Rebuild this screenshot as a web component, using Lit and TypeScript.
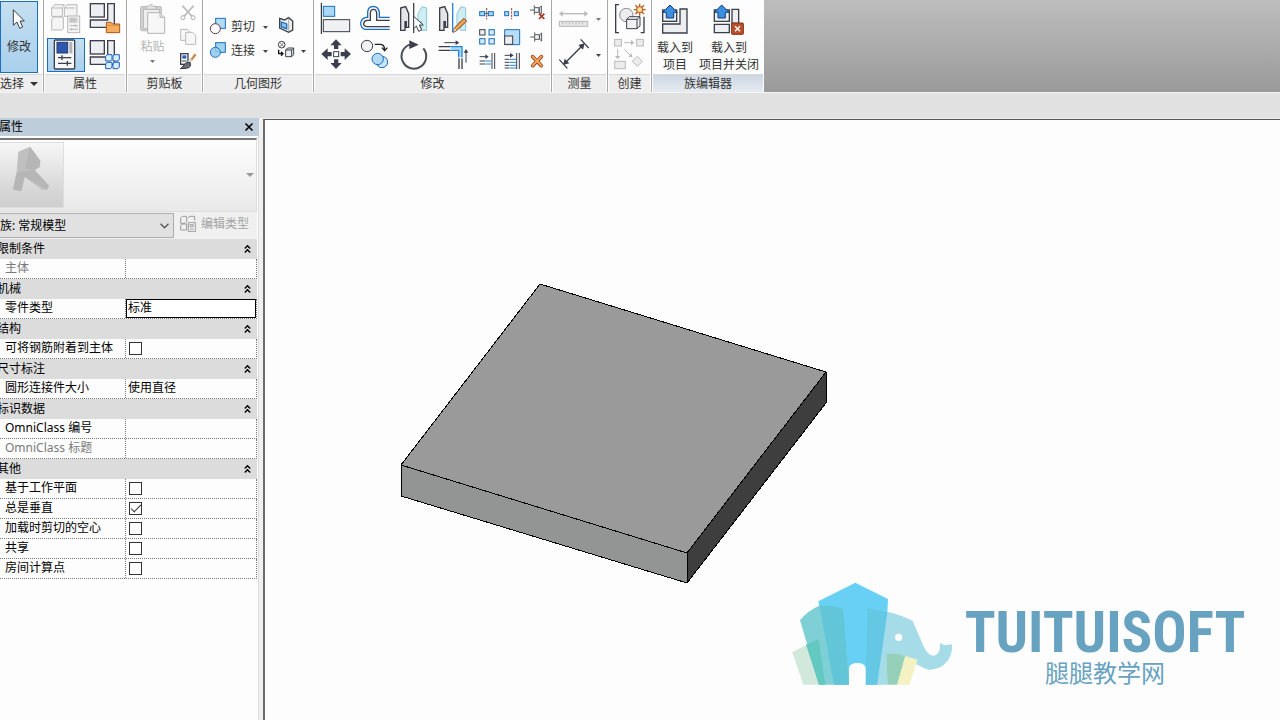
import { LitElement, html, svg, css, nothing } from "lit";
import type { SVGTemplateResult } from "lit";
import { customElement } from "lit/decorators.js";
import { classMap } from "lit/directives/class-map.js";

// Icon artwork is drawn on a 3-units-per-pixel sheet; `x`/`y` select the tile.
const icon = (x: number, y: number, w: number, h: number, art: SVGTemplateResult) =>
  html`<svg class="ic" width=${w} height=${h} viewBox="${x} ${y} ${w * 3} ${h * 3}" aria-hidden="true">${art}</svg>`;

const caret = (off = false) =>
  html`<svg class="ic" width="5" height="3" viewBox="0 0 5 3" aria-hidden="true"><path d="M0 0H5L2.5 3Z" fill=${off ? "#777" : "#444"} /></svg>`;

const D = "#3b3f4c";
const B = "#1c6fbe";
const G = "#b9b9b9";

const cursorArt = svg`<path d="M40 29V76L51 66L59 85L68 81L60 63H73Z" fill="#fff" stroke=${D} stroke-width="3"/>`;

const typeProps = svg`<g fill="#f4f4f4" stroke=${G} stroke-width="3">
  <path d="M155 24L163 14H193L187 24V49H155ZM155 24H187"/><path d="M193 24L201 14H231V44L224 49H193ZM193 24H224"/>
  <path d="M155 58L161 51H190V86L184 90H155Z"/><rect x="203" y="48" width="36" height="50"/></g>
  <rect x="208" y="53" width="20" height="15" fill="#c4c4c4"/><path d="M231 53V68M208 77H234M208 88H234M226 73V81M215 84V92" stroke=${G} stroke-width="3" fill="none"/>`;
const cats = (dy: number) => svg`<g fill="#eceef1" stroke=${D} stroke-width="4" transform="translate(0 ${dy})">
  <rect x="271" y="11" width="42" height="40"/><path d="M323 11H343V82H271V60H323Z"/></g>`;
const folder = svg`${cats(0)}<path d="M319 98V67H333L338 72H359V98Z" fill="#f4ad5e" stroke="#a9561b" stroke-width="3"/><path d="M320 76H358" stroke="#c97a32" stroke-width="2"/>`;
const cube = (x: number, y: number) => svg`<path d="M${x} ${y + 5}L${x + 4} ${y}H${x + 19}V${y + 14}L${x + 15} ${y + 19}H${x}Z" fill="#d9eefb" stroke="#1760bd" stroke-width="3"/>`;
const famTypes = svg`${cats(111)}${cube(317, 164)}${cube(339, 164)}${cube(317, 187)}${cube(339, 187)}`;
const palette = svg`<rect x="163" y="120" width="61" height="87" rx="3" fill="#f7f7f7" stroke=${D} stroke-width="4"/>
  <rect x="171" y="127" width="32" height="32" fill="#2d58ae" stroke="#22366f" stroke-width="3"/><rect x="208" y="126" width="9" height="34" fill="#b0b3ba"/>
  <path d="M174 173H214M174 190H214M186 166V180M202 183V197" stroke=${D} stroke-width="4"/>`;

const pasteArt = svg`<g stroke="#b4b4b4" stroke-width="3"><rect x="422" y="20" width="62" height="72" rx="4" fill="#d6d6d6"/><rect x="430" y="28" width="48" height="58" fill="#eee"/>
  <path d="M438 28V19H446Q452 8 461 19H469V28Z" fill="#e2e2e2"/><path d="M443 38H480L494 52V100H443Z" fill="#f7f7f7"/><path d="M480 38V52H494" fill="#e4e4e4"/></g>`;
const cutArt = svg`<path d="M547 17L576 49M581 17L552 49" stroke="#bdbdbd" stroke-width="5"/><g fill="#fff" stroke="#b0b0b0" stroke-width="3"><circle cx="549" cy="53" r="6"/><circle cx="579" cy="53" r="6"/></g>`;
const copyArt = svg`<g fill="#f7f7f7" stroke=${G} stroke-width="3"><path d="M542 88H562L569 95V121H542Z"/><path d="M557 97H578L587 106V133H557Z"/></g>`;
const brushArt = svg`<rect x="542" y="161" width="22" height="32" fill="#fff" stroke=${D} stroke-width="4"/><rect x="547" y="166" width="12" height="10" fill="#2f63b5"/><path d="M546 183H560" stroke=${D} stroke-width="3"/>
  <path d="M587 163L568 187" stroke="#c98a52" stroke-width="7"/><path d="M574 179L565 189" stroke="#ddd" stroke-width="8"/><path d="M570 187Q577 202 559 205L541 206Q549 202 551 195Q557 185 570 187Z" fill="#6a6d74" stroke="#33363f" stroke-width="3"/>`;

const cutGeo = svg`<rect x="47" y="55" width="29" height="30" fill="#b3dbf3" stroke=${B} stroke-width="3"/><circle cx="46" cy="86" r="15" fill="#fff" stroke="#5a3b45" stroke-width="3"/>`;
const joinGeo = svg`<rect x="47" y="128" width="29" height="29" fill="#9fd3ee" stroke=${B} stroke-width="3"/><circle cx="46" cy="157" r="15" fill="#9fd0f2" stroke=${B} stroke-width="3"/><path d="M47 143V155H60" fill="none" stroke="#6db9c9" stroke-width="2"/>`;
const cope = svg`<path d="M239 55L253 60L266 53L278 63V90L266 97L239 84Z" fill="#eee" stroke=${D} stroke-width="4"/><path d="M266 53V96" stroke="#888" stroke-width="2"/><path d="M244 66L260 72V86L244 80Z" fill="#8fc6ec" stroke=${B} stroke-width="4"/>`;
const paint = svg`<circle cx="245" cy="134" r="10" fill="#fff" stroke=${D} stroke-width="3"/><path d="M239 127L252 141M252 127L239 141" stroke=${D} stroke-width="2"/>
  <path d="M236 149V161H247M243 155L249 161L243 167" fill="none" stroke="#111" stroke-width="4"/><path d="M257 150L263 144H281V164L275 170H257ZM257 150H275V170M275 150L281 144" fill="#eee" stroke=${D} stroke-width="3"/>`;

const alignArt = svg`<path d="M34 9V102" stroke="#111" stroke-width="3"/><rect x="40" y="19" width="34" height="30" fill="#aad7f5" stroke=${B} stroke-width="3"/><rect x="40" y="59" width="79" height="36" fill="#f0f1f3" stroke=${D} stroke-width="3"/>`;
const offsetArt = svg`<g fill="none" stroke-width="4"><path d="M239 88H165Q152 84 152 69Q154 55 168 52H173V37Q174 20 189 19Q206 20 208 37V52H239" stroke=${B}/><path d="M239 80H171Q160 78 161 70Q162 62 172 61H181V39Q182 28 190 28Q199 28 200 39V61H239" stroke=${D}/></g>`;
const mirror = (x: number) => svg`<path d="M${x} 24L${x + 15} 20L${x + 24} 41V82H${x + 17}V65H${x + 13}V91H${x}Z" fill="#e4e5e8" stroke=${D} stroke-width="4"/><path d="M${x + 78} 24L${x + 64} 20L${x + 52} 41V82H${x + 59}V65H${x + 63}V91H${x + 78}Z" fill="#cfeef4" stroke="#8cc5d4" stroke-width="3"/>`;
const mirrorPick = svg`${mirror(272)}<path d="M311 9V99" stroke="#44474f" stroke-width="4"/><path d="M311 49V86L319 78L326 94L335 90L328 75H340Z" fill="#fff" stroke=${D} stroke-width="3"/>`;
const mirrorDraw = svg`${mirror(389)}<path d="M428 9V96" stroke="#2a83d4" stroke-width="4"/><path d="M429 97L434 83L462 55L470 63L441 91Z" fill="#f2a54d" stroke="#7a3d22" stroke-width="3"/><path d="M429 97L433 84L441 91Z" fill="#fff1d8" stroke="#333"/>`;
const moveArt = svg`<g fill=${D}><path d="M78 118L95 136H85V147H72V136H61ZM78 207L95 189H85V178H72V189H61ZM34 162L53 145V156H65V169H53V180ZM123 162L104 145V156H92V169H104V180Z"/></g><rect x="71" y="155" width="15" height="15" fill="#fff" stroke=${D} stroke-width="3"/>`;
const copyMod = svg`<circle cx="171" cy="138" r="17" fill="#f1f2f4" stroke=${D} stroke-width="3"/><path d="M194 133H212Q224 134 224 150M216 143L224 152L232 143" fill="none" stroke="#222" stroke-width="4"/><circle cx="216" cy="186" r="17" fill="#c9e6f8" stroke=${B} stroke-width="3"/><circle cx="203" cy="177" r="17" fill="#b3dbf3" stroke=${B} stroke-width="3"/>`;
const rotateArt = svg`<path d="M340 145A37 37 0 1 1 299 134" fill="none" stroke="#4b4e58" stroke-width="6"/><path d="M298 121L326 134L298 147Z" fill=${D}/>`;
const trimArt = svg`<path d="M422 145H451V172" stroke="#a9daf8" stroke-width="8" fill="none"/><g fill="none" stroke-width="4"><path d="M386 140H420M386 151H420" stroke=${D}/><path d="M447 175V207M456 175V207" stroke=${D}/><path d="M421 140H456V172M421 151H446V172" stroke="#2483d6"/></g><path d="M403 128H440M468 188V155" stroke=${D} stroke-width="3"/><path d="M437 121L448 128L437 135ZM461 158L468 147L475 158Z" fill=${D}/>`;
const splitA = svg`<rect x="509" y="35" width="15" height="12" fill="#a9d8ef" stroke=${B} stroke-width="3"/><rect x="535" y="35" width="15" height="12" fill="#a9d8ef" stroke=${B} stroke-width="3"/><path d="M522 41H537" stroke=${B} stroke-width="3"/><path d="M530 24V58" stroke="#a03a2a" stroke-width="3" stroke-dasharray="7 3"/>`;
const splitB = svg`<rect x="584" y="35" width="12" height="12" fill="#a9d8ef" stroke=${B} stroke-width="3"/><rect x="613" y="35" width="12" height="12" fill="#a9d8ef" stroke=${B} stroke-width="3"/><path d="M605 24V58" stroke="#a03a2a" stroke-width="3" stroke-dasharray="7 3"/>`;
const pin = (x: number, y: number) => svg`<path d="M${x} ${y}H${x + 12}M${x + 13} ${y - 14}V${y + 14}M${x + 14} ${y - 7}H${x + 27}V${y + 7}H${x + 14}M${x + 34} ${y - 12}L${x + 28} ${y - 7}V${y + 7}L${x + 34} ${y + 12}Z" fill="#f3f3f3" stroke="#555861" stroke-width="3"/>`;
const unpin = svg`${pin(660, 30)}<path d="M687 41L703 57M703 41L687 57" stroke="#a83323" stroke-width="5"/>`;
const arrayArt = svg`<rect x="509" y="89" width="16" height="16" fill="#f1f1f3" stroke=${D} stroke-width="3"/><g fill="#d3ebfa" stroke=${B} stroke-width="3"><rect x="537" y="89" width="16" height="16"/><rect x="509" y="116" width="16" height="16"/><rect x="537" y="116" width="16" height="16"/></g>`;
const scaleArt = svg`<path d="M584 89H629V134H584Z" fill="#b9def7" stroke=${B} stroke-width="3"/><rect x="584" y="108" width="24" height="25" fill="#eee" stroke=${D} stroke-width="3"/>`;
const extend1 = svg`<path d="M509 170H530M546 159V207M554 159V207" stroke=${D} stroke-width="3"/><path d="M526 163L536 170L526 177Z" fill=${D}/><path d="M509 183H525M509 192H525" stroke=${D} stroke-width="3"/><path d="M526 183H543M526 192H543" stroke="#2483d6" stroke-width="3"/>`;
const extend2 = svg`<path d="M584 166H603M620 159V207M628 159V207M584 178H598M584 187H598M584 196H598M584 204H598" stroke=${D} stroke-width="3"/><path d="M600 159L611 166L600 173Z" fill=${D}/><path d="M599 178H618M599 187H618M599 196H618M599 204H618" stroke="#2483d6" stroke-width="3"/>`;
const deleteArt = svg`<path d="M668 170L694 197M694 170L668 197" stroke="#9b3f1d" stroke-width="11" stroke-linecap="round"/><path d="M668 170L694 197M694 170L668 197" stroke="#f6a85b" stroke-width="6" stroke-linecap="round"/>`;

const measureArt = svg`<path d="M34 41H106" stroke=${G} stroke-width="4"/><path d="M38 32L27 41L38 50M103 32L114 41L103 50" fill=${G}/><rect x="28" y="64" width="85" height="15" fill="#e6e6e6" stroke=${G} stroke-width="3"/><path d="M38 66V73M48 66V71M58 66V73M68 66V71M78 66V73M88 66V71M98 66V73" stroke=${G} stroke-width="3"/>`;
const dimArt = svg`<path d="M45 189L99 135" stroke=${D} stroke-width="4"/><path d="M39 195L44 176L58 190ZM104 130L99 149L85 135Z" fill=${D}/><path d="M28 179L52 205M92 118L116 144" stroke=${D} stroke-width="4"/>`;
const groupArt = svg`<path d="M207 14H197V98H207M272 98H282V50" fill="none" stroke=${D} stroke-width="4"/><circle cx="229" cy="45" r="20" fill="#ececee" stroke="#888b93" stroke-width="3"/><path d="M230 58L238 50H270V78L261 86H230ZM230 58H261V86M261 58L270 50" fill="#f1f1f3" stroke=${D} stroke-width="3"/>
  <path d="M269 11V47M251 29H287M256 16L282 42M282 16L256 42" stroke="#b5602c" stroke-width="4"/><circle cx="269" cy="29" r="9" fill="#ffe2a8" stroke="#c4702c" stroke-width="4"/>`;
const similarArt = svg`<g fill="#ececec" stroke=${G} stroke-width="3"><rect x="194" y="118" width="20" height="20"/><rect x="260" y="118" width="20" height="20"/><rect x="194" y="184" width="32" height="22"/><path d="M262 169L277 184L262 199L247 184Z"/></g><path d="M222 128H248M203 147V172M223 148L241 166" stroke=${G} stroke-width="3"/><path d="M243 120L253 128L243 136ZM195 168H211L203 178ZM247 172L235 170L245 160Z" fill=${G}/>`;
const upArrow = (x: number) => svg`<path d="M${x} 15L${x + 22} 37H${x + 11}V54H${x - 11}V37H${x - 22}Z" fill="#3c8fe0" stroke="#123f7c" stroke-width="3"/>`;
const loadArt = svg`<path d="M380 72H338V99H411V27H390V72Z" fill="#eceef0" stroke=${D} stroke-width="4"/><rect x="338" y="30" width="42" height="34" fill="#eceef0" stroke=${D} stroke-width="4"/>${upArrow(360)}`;
const loadClose = svg`<path d="M493 73H538V98H493ZM546 28H566V70H546ZM493 30H538V64H493Z" fill="#eceef0" stroke=${D} stroke-width="4"/>${upArrow(515)}<rect x="545" y="69" width="35" height="34" rx="2" fill="#b9512a" stroke="#7c2f17" stroke-width="3"/><path d="M555 79L570 94M570 79L555 94" stroke="#fff" stroke-width="4"/>`;

const editType = svg`<g fill="none" stroke="#9c9c9c" stroke-width="3"><path d="M542 324L547 319H560V335L555 340H542ZM564 324L569 319H584V332M542 346L546 342H560V360H542Z"/><rect x="565" y="338" width="21" height="26" fill="#f4f4f4"/><path d="M570 344H580V350H570ZM570 357H581"/></g>`;
const rLogo = svg`<path d="M55 128L90 113L121 155L119 174L104 183L147 230L141 242L127 243L74 204L64 246L39 242L50 190Z" fill="#c0c0c0"/><path d="M90 113L121 155L119 174L104 183L74 180Z" fill="#b6b6b6"/><path d="M50 190L104 183L147 230L141 242L74 204L64 246L39 242Z" fill="#b2b2b2" opacity=".7"/>`;

interface Row { label: string; kind: "text" | "check"; value?: string; off?: boolean; checked?: boolean; focus?: boolean }
interface Group { title: string; rows: Row[] }

const groups: Group[] = [
  { title: "限制条件", rows: [{ label: "主体", kind: "text", off: true }] },
  { title: "机械", rows: [{ label: "零件类型", kind: "text", value: "标准", focus: true }] },
  { title: "结构", rows: [{ label: "可将钢筋附着到主体", kind: "check" }] },
  { title: "尺寸标注", rows: [{ label: "圆形连接件大小", kind: "text", value: "使用直径" }] },
  { title: "标识数据", rows: [{ label: "OmniClass 编号", kind: "text" }, { label: "OmniClass 标题", kind: "text", off: true }] },
  {
    title: "其他",
    rows: [
      { label: "基于工作平面", kind: "check" },
      { label: "总是垂直", kind: "check", checked: true },
      { label: "加载时剪切的空心", kind: "check" },
      { label: "共享", kind: "check" },
      { label: "房间计算点", kind: "check" },
    ],
  },
];

const base = css`
  * { box-sizing: border-box; }
  button, input, select { font: inherit; color: inherit; margin: 0; border-radius: 0; }
  button { padding: 0; border: 0; background: none; display: flex; align-items: center; justify-content: center; }
  .ic { display: block; flex: none; overflow: visible; }
`;

@customElement("ribbon-bar")
export class RibbonBar extends LitElement {
  static styles = [base, css`
    :host { display: flex; height: 92px; background: linear-gradient(#bdbdbd, #9a9a9a); border-bottom: 1px solid #f4f4f4; }
    section { display: flex; flex-direction: column; flex: none; background: #fdfdfd; border-right: 1px solid #a8a8a8; }
    section:last-child { border-right: 0; }
    .body { display: flex; flex: 1; padding-top: 1px; align-items: flex-start; }
    h2 { margin: 0 1px; height: 18px; font: inherit; line-height: 17px; background: #eee; border-top: 1px solid #d9d9d9; text-align: center; display: flex; gap: 6px; align-items: center; justify-content: center; }
    .select { width: 44px; } .props { width: 83px; } .clip { width: 76px; } .geo { width: 111px; }
    .modify { width: 238px; } .measure { width: 56px; } .create { width: 44px; } .family { width: 112px; }
    .select h2 { margin-left: 0; padding-right: 4px; }
    .family h2 { background: linear-gradient(#cdd7e3, #e6ebf0); }
    .on { background: linear-gradient(#c5dff1, #a9d0ec); border: 1px solid #1c6fbe; }
    .pick { flex-direction: column; justify-content: flex-start; width: 38px; height: 72px; gap: 8px; padding-top: 7px; }
    .props .body { padding-left: 3px; }
    .grid2 { display: grid; grid-template-columns: 38px 38px; gap: 3px 2px; }
    .grid2 .on { height: 34px; }
    .paste { flex-direction: column; width: 51px; gap: 4px; padding-top: 2px; color: #b5b5b5; line-height: 18px; }
    .col { display: flex; flex-direction: column; gap: 6px; padding: 3px 0 0 1px; }
    .tools { display: grid; grid-template-columns: 68px auto; grid-auto-rows: 24px; padding: 14px 0 0 6px; }
    .tools button { justify-content: flex-start; }
    .tools span { margin: 0 8px 0 4px; }
    .tools button.tight { gap: 6px; }
    .modify .body { padding-left: 2px; gap: 2px; }
    .big { display: grid; grid-template-columns: repeat(4, 39px); }
    .small { display: grid; grid-template-columns: repeat(3, 25px); }
    .measure .body, .create .body { flex-direction: column; padding-left: 4px; }
    .measure button { gap: 6px; }
    .load { flex-direction: column; gap: 4px; padding-top: 2px; line-height: 17px; width: 46px; }
    .load.wide { width: 62px; }
  `];

  private b(label: string, art: unknown, cls: Record<string, boolean> = {}) {
    return html`<button class=${classMap(cls)} aria-label=${label}>${art}</button>`;
  }

  render() {
    const big: [string, SVGTemplateResult][] = [
      ["对齐", alignArt], ["偏移", offsetArt], ["镜像 - 拾取轴", mirrorPick], ["镜像 - 绘制轴", mirrorDraw],
      ["移动", moveArt], ["复制", copyMod], ["旋转", rotateArt], ["修剪", trimArt],
    ];
    const small: [string, SVGTemplateResult][] = [
      ["拆分图元", splitA], ["用间隙拆分", splitB], ["解锁", unpin],
      ["阵列", arrayArt], ["缩放", scaleArt], ["锁定", pin(661, 111)],
      ["延伸单个", extend1], ["延伸多个", extend2], ["删除", deleteArt],
    ];
    return html`
      <section class="select">
        <div class="body"><button class="on pick">${icon(39, 27, 12, 21, cursorArt)}<span>修改</span></button></div>
        <h2>选择 <svg class="ic" width="8" height="4" viewBox="0 0 8 4"><path d="M0 0H8L4 4Z" fill="#333" /></svg></h2>
      </section>
      <section class="props">
        <div class="body"><div class="grid2">
          ${this.b("类型属性", icon(141, 3, 38, 34, typeProps))}${this.b("族类别", icon(261, 3, 38, 34, folder))}
          ${this.b("属性选项板", icon(141, 114, 38, 34, palette), { on: true })}${this.b("族类型", icon(261, 114, 38, 34, famTypes))}
        </div></div>
        <h2>属性</h2>
      </section>
      <section class="clip">
        <div class="body">
          <button class="paste">${icon(417, 9, 27, 31, pasteArt)}<span>粘贴</span>${caret(true)}</button>
          <div class="col">${this.b("剪切", icon(537, 12, 18, 18, cutArt))}${this.b("复制", icon(537, 84, 18, 18, copyArt))}${this.b("匹配类型", icon(537, 156, 18, 18, brushArt))}</div>
        </div>
        <h2>剪贴板</h2>
      </section>
      <section class="geo">
        <div class="body"><div class="tools">
          <button>${icon(27, 54, 18, 18, cutGeo)}<span>剪切</span>${caret()}</button>${this.b("应用连接端切割", icon(231, 54, 18, 18, cope))}
          <button>${icon(27, 126, 18, 18, joinGeo)}<span>连接</span>${caret()}</button>
          ${this.b("填色", html`${icon(231, 126, 18, 18, paint)}${caret()}`, { tight: true })}
        </div></div>
        <h2>几何图形</h2>
      </section>
      <section class="modify">
        <div class="body">
          <div class="big">${big.map(([n, a], i) => this.b(n, icon(18 + (i % 4) * 117, i < 4 ? 3 : 111, 39, 36, a)))}</div>
          <div class="small">${small.map(([n, a], i) => this.b(n, icon(492 + (i % 3) * 75, 3 + Math.floor(i / 3) * 72, 25, 24, a)))}</div>
        </div>
        <h2>修改</h2>
      </section>
      <section class="measure">
        <div class="body">${this.b("测量", html`${icon(18, 3, 34, 36, measureArt)}${caret(true)}`)}${this.b("尺寸标注", html`${icon(18, 111, 34, 36, dimArt)}${caret()}`)}</div>
        <h2>测量</h2>
      </section>
      <section class="create">
        <div class="body">${this.b("创建组", icon(186, 3, 36, 36, groupArt))}${this.b("创建类似", icon(186, 111, 36, 36, similarArt))}</div>
        <h2>创建</h2>
      </section>
      <section class="family">
        <div class="body">
          <button class="load">${icon(333, 9, 28, 32, loadArt)}<span>载入到<br />项目</span></button>
          <button class="load wide">${icon(489, 9, 32, 32, loadClose)}<span>载入到<br />项目并关闭</span></button>
        </div>
        <h2>族编辑器</h2>
      </section>`;
  }
}

@customElement("property-palette")
export class PropertyPalette extends LitElement {
  static styles = [base, css`
    :host { display: block; flex: none; width: 260px; margin-left: -3px; padding-right: 1px; background: #fdfdfd; border-right: 1px solid #ddd; color: #000; }
    header { display: flex; align-items: center; justify-content: space-between; height: 18px; margin-right: -2px; padding: 0 5px 0 2px; background: #bdcdda; }
    h1 { margin: 0; font: inherit; }
    .type { display: flex; align-items: center; justify-content: space-between; width: 100%; height: 74px; margin-top: 2px; padding: 1px 2px 2px 0; border-top: 2px solid #777; border-bottom: 1px solid #ddd; border-right: 1px solid #ddd; background: linear-gradient(#fdfdfd, #e9e9e9); }
    .thumb { padding-left: 3px; border: 1px solid #ddd; border-left: 0; background: linear-gradient(#f6f6f6, #d8d8d8 70%, #cecece); }
    .bar { display: flex; align-items: flex-start; height: 27px; background: #f0f0f0; padding-top: 1px; }
    .pickbox { display: flex; align-items: center; width: 177px; height: 25px; background: #e1e1e1; border: 1px solid #adadad; padding-right: 4px; }
    select { appearance: none; flex: 1; height: 23px; border: 0; background: none; padding: 0 0 0 2px; outline: 0; }
    .edit { gap: 4px; height: 22px; margin-left: 6px; color: #a2a2a2; }
    .head { display: flex; justify-content: space-between; width: 100%; height: 20px; padding-right: 6px; background: #dcdcdc; }
    .row { display: grid; grid-template-columns: 129px 1fr; height: 20px; border-bottom: 1px dotted #777; border-right: 1px dotted #777; }
    label { padding-left: 8px; line-height: 18px; white-space: nowrap; border-right: 1px dotted #777; }
    .off { color: #7a7a7a; }
    .text { width: 100%; height: 19px; min-width: 0; border: 1px solid transparent; background: none; padding: 0 0 3px 1px; outline: 0; }
    .focus { border-color: #000; background: #fff; }
    .check { appearance: none; width: 13px; height: 13px; margin: 3px 0 0 3px; border: 1px solid #333; background: #fff; display: grid; place-items: center; }
    .check:checked::after { content: ""; width: 9px; height: 4px; border-left: 1px solid #333; border-bottom: 1px solid #333; transform: rotate(-45deg) translate(1px, -1px); }
  `];

  render() {
    return html`
      <header><h1>属性</h1><button aria-label="关闭"><svg class="ic" width="10" height="10" viewBox="0 0 10 10"><path d="M1.5 1.5L8.5 8.5M8.5 1.5L1.5 8.5" stroke="#000" stroke-width="1.6" /></svg></button></header>
      <button class="type" aria-label="类型选择器">
        <span class="thumb">${icon(0, 102, 63, 64, rLogo)}</span>
        <svg class="ic" width="8" height="4" viewBox="0 0 8 4"><path d="M0 0H8L4 4Z" fill="#999" /></svg>
      </button>
      <div class="bar">
        <div class="pickbox">
          <select aria-label="族"><option>族: 常规模型</option></select>
          <svg class="ic" width="9" height="6" viewBox="0 0 9 6"><path d="M.5 .8L4.5 4.8L8.5 .8" fill="none" stroke="#555" stroke-width="1.3" /></svg>
        </div>
        <button class="edit">${icon(540, 318, 17, 17, editType)}<span>编辑类型</span></button>
      </div>
      ${groups.map((g, gi) => html`
        <button class="head"><span>${g.title}</span><svg class="ic" width="7" height="8" viewBox="0 0 7 8"><path d="M.8 3.5L3.5 .8L6.2 3.5M.8 7.5L3.5 4.8L6.2 7.5" fill="none" stroke="#000" stroke-width="1.4" /></svg></button>
        ${g.rows.map((r, ri) => {
          const id = `p${gi}-${ri}`;
          return html`<div class="row">
            <label class=${classMap({ off: !!r.off })} for=${id}>${r.label}</label>
            ${r.kind === "check"
              ? html`<input class="check" type="checkbox" id=${id} .checked=${!!r.checked} />`
              : html`<input class=${classMap({ text: true, focus: !!r.focus })} type="text" id=${id} value=${r.value ?? nothing} ?disabled=${!!r.off} />`}
          </div>`;
        })}`)}`;
  }
}

@customElement("model-view")
export class ModelView extends LitElement {
  static styles = css`
    :host { display: block; position: relative; flex: 1; margin: 1px 0 0 4px; border-left: 2px solid #6b6b6b; border-top: 1px solid #555; background: #fdfdfd; overflow: hidden; }
    .slab { position: absolute; left: 135px; top: 163px; display: block; }
    .mark { position: absolute; right: 34px; bottom: 33px; display: flex; align-items: flex-end; color: #67a2c0; }
    .mark svg { display: block; margin-bottom: 2px; }
    .words { display: flex; flex-direction: column; align-items: center; width: 282px; margin-left: 12px; white-space: nowrap; }
    .brand { font: bold 57px/52px "Liberation Sans Narrow", "Roboto Condensed", "Open Sans Condensed", "DejaVu Sans Condensed", sans-serif; }
    .name { font-size: 24px; line-height: 28px; }
  `;

  render() {
    return html`
      <svg class="slab" width="427" height="302" viewBox="400 283 427 302" role="img" aria-label="三维模型">
        <g stroke="#000" stroke-width="1" stroke-linejoin="round" shape-rendering="crispEdges">
          <path d="M540 284L826 372L687 553L401 465Z" fill="#9a9a9a" />
          <path d="M401 465L687 553V583L401 496Z" fill="#939594" />
          <path d="M826 372V403L687 583V553Z" fill="#3e3e3e" />
        </g>
      </svg>
      <div class="mark">
        <svg width="160" height="103" viewBox="36 34 480 309" aria-hidden="true">
          <path d="M37 245L113 204L136 342H70Z" fill="#d2e8dc" />
          <path d="M262 113Q340 122 398 150L430 225Q443 256 463 255Q482 250 480 217L493 224L516 221C519 262 492 297 446 297Q420 292 376 256L322 250V342H257Z" fill="#a6dce8" />
          <path d="M115 92L226 36L324 85L322 124L291 342H162Z" fill="#68d0f4" />
          <path d="M60 148Q86 118 118 105Q155 102 190 115L207 342H117Z" fill="#7fd0d6" />
          <path d="M118 105Q155 102 190 115L207 342H162Z" fill="#63c6d8" />
          <path d="M78 222L116 205L136 342H117Z" fill="#63c8c0" />
          <path d="M262 113L322 124L291 342H257Z" fill="#64c8e4" />
          <path d="M320 250Q350 247 376 256L352 342H322Z" fill="#96d0b8" />
          <path d="M376 256L413 267L388 342H352Z" fill="#f4f2c2" />
          <path d="M207 343V292Q210 277 232 277Q254 277 257 292V343Z" fill="#fdfdfd" />
          <circle cx="356" cy="200" r="11" fill="#fdfdfd" />
        </svg>
        <div class="words"><span class="brand">TUITUISOFT</span><span class="name">腿腿教学网</span></div>
      </div>`;
  }
}

@customElement("app-root")
export class AppRoot extends LitElement {
  static styles = css`
    :host { display: flex; flex-direction: column; min-height: 100vh; overflow: hidden; background: #f0f0f0; color: #333; font: 12px/18px "Noto Sans", "Noto Sans CJK SC", sans-serif; }
    .options { height: 25px; flex: none; background: #e1e1e1; }
    main { display: flex; flex: 1; }
  `;
  render() {
    return html`<ribbon-bar></ribbon-bar><div class="options"></div><main><property-palette></property-palette><model-view></model-view></main>`;
  }
}
